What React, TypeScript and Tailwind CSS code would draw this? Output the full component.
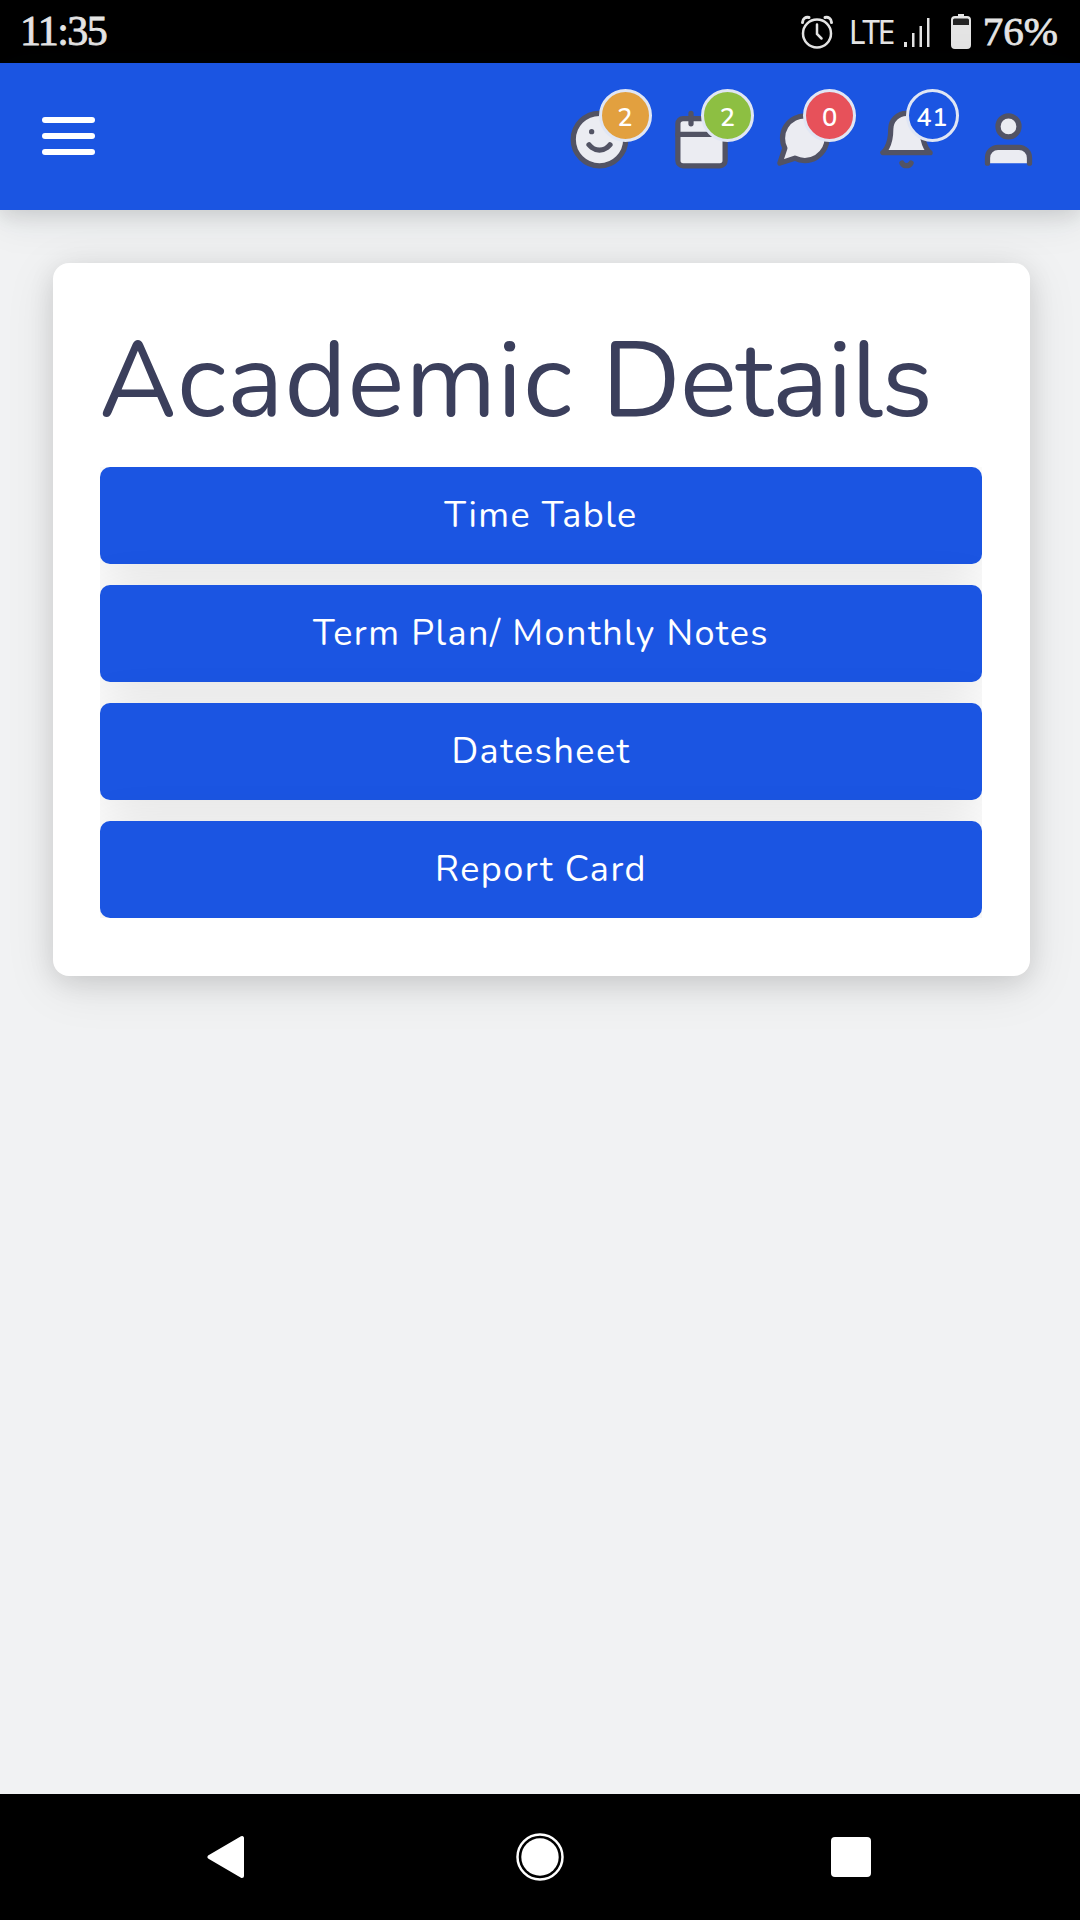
import type { ReactNode } from "react"

const links = ["Time Table", "Term Plan/ Monthly Notes", "Datesheet", "Report Card"]

function StatusBar() {
  return (
    <div className="flex h-[63px] shrink-0 items-center justify-between bg-black pr-[22px] pl-[20px] text-[#e4e4e4]">
      <span className="font-['Liberation_Serif',serif] text-[42px] leading-[61px] tracking-[-1.6px] [-webkit-text-stroke:0.8px_#e4e4e4]">
        11:35
      </span>
      <div className="flex items-center">
        <svg className="mr-[15px] h-[34px] w-[34px]" viewBox="0 0 34 34" fill="none" stroke="currentColor" strokeWidth="2.5" strokeLinecap="round">
          <circle cx="17" cy="18.5" r="14" />
          <path d="M17 9.5v9.5l4.5 4.5" />
          <path d="M2.5 7.5C2.5 3.5 6 1.5 9 2.5M31.5 7.5C31.5 3.5 28 1.5 25 2.5" strokeWidth="3" />
        </svg>
        <span className="w-[55px] font-['Noto_Sans',sans-serif] text-[32px] leading-[61px] tracking-[-2.6px]">LTE</span>
        <svg className="h-[30px] w-[27px]" viewBox="0 0 27 30" fill="currentColor">
          <rect x="0" y="25" width="3" height="5" />
          <rect x="8" y="16" width="2.5" height="14" />
          <rect x="15.5" y="9" width="2.5" height="21" />
          <rect x="23" y="1" width="2.5" height="29" />
        </svg>
        <svg className="mr-[12px] ml-[20px] h-[35px] w-[20px]" viewBox="0 0 20 35">
          <path d="M7 0h6v2h3a4 4 0 0 1 4 4v25a4 4 0 0 1-4 4H4a4 4 0 0 1-4-4V6a4 4 0 0 1 4-4h3z" fill="#e4e4e4" />
          <path d="M2 6a1.5 1.5 0 0 1 1.5-1.5h13A1.5 1.5 0 0 1 18 6v5H2z" fill="#242424" />
        </svg>
        <span className="font-['Liberation_Serif',serif] text-[41px] leading-[61px] [-webkit-text-stroke:0.8px_#e4e4e4]">
          76%
        </span>
      </div>
    </div>
  )
}

interface NavIconProps {
  children: ReactNode
  count?: number
  badge?: string
}

function NavIcon({ children, count, badge }: NavIconProps) {
  return (
    <button className="relative h-[63px] w-[63px]">
      <svg className="h-full w-full" viewBox="0 0 24 24" fill="#ebecf2" stroke="#525364" strokeWidth="2" strokeLinecap="round" strokeLinejoin="round">
        {children}
      </svg>
      {badge && (
        <span
          className={`absolute -top-[19px] left-[31px] flex h-[53px] w-[53px] items-center justify-center rounded-full border-3 border-[#e0e6f4] pt-[5px] text-[25.5px] font-semibold tracking-[0.6px] text-white ${badge}`}
        >
          {count}
        </span>
      )}
    </button>
  )
}

function Header() {
  return (
    <header className="z-10 flex h-[147px] shrink-0 items-center justify-between bg-[#1b55e2] pr-[40px] pl-[42px] shadow-[0_8px_40px_rgba(31,45,61,0.1),0_6px_18px_rgba(0,0,0,0.1)]">
      <button className="mb-[1px] flex w-[53px] flex-col gap-[10px]">
        <span className="h-[6px] rounded-full bg-white" />
        <span className="h-[6px] rounded-full bg-white" />
        <span className="h-[6px] rounded-full bg-white" />
      </button>
      <nav className="mt-[6px] flex gap-[39.3px]">
        <NavIcon count={2} badge="bg-[#e2a03f]">
          <circle cx="12" cy="12" r="10" />
          <path d="M8 14s1.5 2 4 2 4-2 4-2" />
          <path d="M9 9h.01" />
        </NavIcon>
        <NavIcon count={2} badge="bg-[#8dbf42]">
          <rect x="3" y="4" width="18" height="18" rx="2" />
          <path d="M16 2v4M8 2v4M3 10h18" />
        </NavIcon>
        <NavIcon count={0} badge="bg-[#e7515a]">
          <path d="M21 11.5a8.38 8.38 0 0 1-.9 3.8 8.5 8.5 0 0 1-7.6 4.7 8.38 8.38 0 0 1-3.8-.9L3 21l1.9-5.7a8.38 8.38 0 0 1-.9-3.8 8.5 8.5 0 0 1 4.7-7.6 8.38 8.38 0 0 1 3.8-.9h.5a8.48 8.48 0 0 1 8 8z" />
        </NavIcon>
        <NavIcon count={41} badge="bg-[#1b55e2]">
          <path d="M18 8A6 6 0 0 0 6 8c0 7-3 9-3 9h18s-3-2-3-9" />
          <path d="M13.73 21a2 2 0 0 1-3.46 0" fill="#525364" />
        </NavIcon>
        <NavIcon>
          <path d="M20 21v-2a4 4 0 0 0-4-4H8a4 4 0 0 0-4 4v2" />
          <circle cx="12" cy="7" r="4" />
        </NavIcon>
      </nav>
    </header>
  )
}

function AndroidNav() {
  return (
    <div className="flex h-[126px] shrink-0 items-center justify-between bg-black pr-[209px] pl-[207px] text-white">
      <svg className="h-[44px] w-[40px]" viewBox="0 0 40 44" fill="currentColor" stroke="currentColor" strokeWidth="4" strokeLinejoin="round">
        <path d="M2.5 22L35 3v38z" />
      </svg>
      <svg className="ml-[1px] h-[48px] w-[48px]" viewBox="0 0 48 48">
        <circle cx="24" cy="24" r="22.5" fill="none" stroke="currentColor" strokeWidth="2.5" />
        <circle cx="24" cy="24" r="18.7" fill="currentColor" />
      </svg>
      <div className="h-[40px] w-[40px] rounded-[4px] bg-white" />
    </div>
  )
}

export default function App() {
  return (
    <div className="flex h-[1920px] w-[1080px] flex-col overflow-hidden bg-[#f1f2f3] font-[Nunito,Lato,sans-serif]">
      <StatusBar />
      <Header />

      <main className="flex-1 pt-[53px] pr-[50px] pl-[53px]">
        <section className="h-[713px] rounded-[16px] bg-white pt-[57px] pr-[48px] pl-[47px] shadow-[0_10px_50px_rgba(0,0,0,0.1),0_6px_26px_rgba(0,0,0,0.1)]">
          <h1 className="-ml-[1px] h-[147px] text-[106.5px] leading-[123px] tracking-[1px] whitespace-nowrap text-[#3b3f5c]">
            Academic <span className="tracking-[-0.9px]">Details</span>
          </h1>
          {/* clips the button shadows so they only show in the gaps */}
          <div className="flex flex-col gap-[21px] overflow-hidden">
            {links.map((label) => (
              <button
                key={label}
                className="h-[97px] rounded-[10px] bg-[#1b55e2] text-[36px] tracking-[1.45px] text-white shadow-[0_10px_52px_rgba(0,0,0,0.11)]"
              >
                {label}
              </button>
            ))}
          </div>
        </section>
      </main>

      <AndroidNav />
    </div>
  )
}
